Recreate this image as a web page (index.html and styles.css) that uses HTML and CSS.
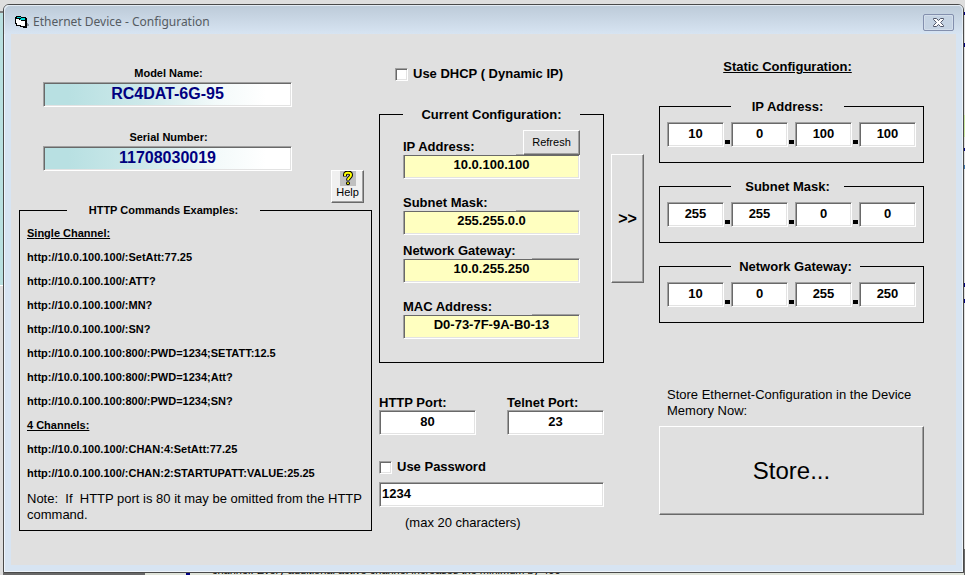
FILE: index.html
```html
<!DOCTYPE html>
<html lang="en">
<head>
<meta charset="utf-8">
<title>Ethernet Device - Configuration</title>
<link rel="stylesheet" href="styles.css">
</head>
<body>
<main class="window">
  <header class="titlebar">
    <svg class="app-icon" width="14" height="14" viewBox="0 0 14 14" shape-rendering="crispEdges" aria-hidden="true">
      <path d="M11 7h1v1h1v1h1v2h-3z" fill="#8a929c"/>
      <path d="M1 1h5v1h5v1h1v10H8v-1H5v-1H1V9H0V2h1z" fill="#000"/>
      <path d="M1 4h3v1h2v1h4v5H8v0H6v-1H2V8H1z" fill="#fff"/>
      <path d="M2 2h4v1h4v1H6V3H2z" fill="#00d8d8"/>
      <path d="M5 4h5v1H5z" fill="#00d8d8"/>
    </svg>
    <h1 class="title">Ethernet Device - Configuration</h1>
    <button class="close" type="button" aria-label="Close">
      <svg width="13" height="11" viewBox="0 0 13 11" aria-hidden="true">
        <path d="M1.500 1.500h3L6.500 3.600 8.500 1.500h3v1L8.600 5.500l2.900 3v1h-3L6.500 7.400 4.500 9.500h-3v-1l2.900-3-2.900-3z" fill="#fff" stroke="#4f5468" stroke-width="1"/>
      </svg>
    </button>
  </header>

  <form class="client">
    <section class="col-info">
      <div class="identity">
        <div class="identity-fields">
          <label class="small-label" for="model">Model Name:</label>
          <input class="field id-field" id="model" value="RC4DAT-6G-95" readonly>
          <label class="small-label second" for="serial">Serial Number:</label>
          <input class="field id-field" id="serial" value="11708030019" readonly>
        </div>
        <button class="btn help" type="button">
          <svg width="16" height="15" viewBox="0 0 16 15" aria-hidden="true">
            <path d="M0 0h16v15H0z" fill="#c0c0c0"/>
            <path d="M5 5.500V4q0-2.500 3-2.500t3 2.500q0 1.500-1.500 2.600T8 9.500" fill="none" stroke="#000" stroke-width="4"/>
            <circle cx="8" cy="12.300" r="2" fill="#000"/>
            <path d="M5 5V4q0-2.300 3-2.300t3 2.300q0 1.500-1.500 2.600T8 9" fill="none" stroke="#ff0" stroke-width="2"/>
            <circle cx="8" cy="12.300" r="1" fill="#ff0"/>
          </svg>
          <span>Help</span>
        </button>
      </div>
      <fieldset class="group commands">
        <legend class="legend-commands"><span>HTTP Commands Examples:</span></legend>
        <h2>Single Channel:</h2>
        <p>http://10.0.100.100/:SetAtt:77.25</p>
        <p>http://10.0.100.100/:ATT?</p>
        <p>http://10.0.100.100/:MN?</p>
        <p>http://10.0.100.100/:SN?</p>
        <p>http://10.0.100.100:800/:PWD=1234;SETATT:12.5</p>
        <p>http://10.0.100.100:800/:PWD=1234;Att?</p>
        <p>http://10.0.100.100:800/:PWD=1234;SN?</p>
        <h2>4 Channels:</h2>
        <p>http://10.0.100.100/:CHAN:4:SetAtt:77.25</p>
        <p>http://10.0.100.100/:CHAN:2:STARTUPATT:VALUE:25.25</p>
        <p class="note">Note:&nbsp; If&nbsp; HTTP port is 80 it may be omitted from the HTTP command.</p>
      </fieldset>
    </section>

    <section class="col-current">
      <label class="check dhcp"><input type="checkbox">Use DHCP ( Dynamic IP)</label>
      <fieldset class="group current">
        <legend class="legend-current"><span>Current Configuration:</span></legend>
        <div class="label-row">
          <label class="tag" for="ip">IP Address:</label>
          <button class="btn refresh" type="button">Refresh</button>
        </div>
        <input class="field value" id="ip" value="10.0.100.100" readonly>
        <label class="tag spaced" for="mask">Subnet Mask:</label>
        <input class="field value" id="mask" value="255.255.0.0" readonly>
        <label class="tag tag-wide" for="gateway">Network Gateway:</label>
        <input class="field value" id="gateway" value="10.0.255.250" readonly>
        <label class="tag tag-wide spaced" for="mac">MAC Address:</label>
        <input class="field value" id="mac" value="D0-73-7F-9A-B0-13" readonly>
      </fieldset>
      <div class="ports">
        <div>
          <label class="port-label" for="http">HTTP Port:</label>
          <input class="field" id="http" value="80">
        </div>
        <div>
          <label class="port-label" for="telnet">Telnet Port:</label>
          <input class="field" id="telnet" value="23">
        </div>
      </div>
      <label class="check password-check"><input type="checkbox">Use Password</label>
      <input class="field password" value="1234" aria-label="Password">
      <p class="hint">(max 20 characters)</p>
    </section>

    <button class="btn copy" type="button" aria-label="Copy current to static">&gt;&gt;</button>

    <section class="col-static">
      <h2 class="static-title">Static Configuration:</h2>
      <fieldset class="group address">
        <legend class="legend-address"><span>IP Address:</span></legend>
        <div class="octets">
          <input class="field" value="10" aria-label="IP octet 1"><i></i>
          <input class="field" value="0" aria-label="IP octet 2"><i></i>
          <input class="field" value="100" aria-label="IP octet 3"><i></i>
          <input class="field" value="100" aria-label="IP octet 4">
        </div>
      </fieldset>
      <fieldset class="group address">
        <legend class="legend-address"><span>Subnet Mask:</span></legend>
        <div class="octets">
          <input class="field" value="255" aria-label="Mask octet 1"><i></i>
          <input class="field" value="255" aria-label="Mask octet 2"><i></i>
          <input class="field" value="0" aria-label="Mask octet 3"><i></i>
          <input class="field" value="0" aria-label="Mask octet 4">
        </div>
      </fieldset>
      <fieldset class="group address">
        <legend class="legend-address legend-gateway"><span>Network Gateway:</span></legend>
        <div class="octets">
          <input class="field" value="10" aria-label="Gateway octet 1"><i></i>
          <input class="field" value="0" aria-label="Gateway octet 2"><i></i>
          <input class="field" value="255" aria-label="Gateway octet 3"><i></i>
          <input class="field" value="250" aria-label="Gateway octet 4">
        </div>
      </fieldset>
      <p class="store-text">Store Ethernet-Configuration in the Device Memory Now:</p>
      <button class="btn store" type="button">Store...</button>
    </section>
  </form>
</main>
<div class="backdrop">
  <span class="bar"></span>
  <span class="mark"></span>
  <span class="backdrop-text">channel. Every additional active channel increases the minimum by 400</span>
</div>
</body>
</html>
```

FILE: styles.css
```css
* {
  box-sizing: border-box;
}

body {
  margin: 0;
  min-height: 100vh;
  padding: 4px 1px 0 3px;
  display: flex;
  flex-direction: column;
  overflow: hidden;
  background:
    linear-gradient(#dedede 11px, #808080 11px 13px, #b9e0e0 13px 285px, #fff 285px 286px, #dedede 286px) left top / 5px 100% no-repeat,
    linear-gradient(#dedede 12px, #000080 12px 15px, #dedede 15px 43px, #000080 43px 47px, #dedede 47px 115px, #c8e6a0 115px 137px, #dedede 137px 148px, #000080 148px 151px, #dedede 151px 165px, #3a78b4 165px 169px, #dedede 169px 283px, #000080 283px 287px, #dedede 287px 299px, #000080 299px 303px, #dedede 303px 549px, #696969 549px) right top / 5px 100% no-repeat,
    #dedede;
  font-family: "Liberation Sans", Arial, sans-serif;
  font-size: 13px;
  line-height: 16px;
  color: #000;
}

h1, h2, p {
  margin: 0;
}

.window {
  flex: 1;
  display: flex;
  flex-direction: column;
  border: 1px solid #4a4a4a;
  border-radius: 6px 6px 0 0;
  background: #d7e4f2;
  box-shadow: inset 1px 1px 0 #eef4fa, inset -1px -1px 0 #eef4fa;
}

.titlebar {
  display: flex;
  align-items: center;
  height: 29px;
  padding: 5px 9px 0 11px;
  border-radius: 5px 5px 0 0;
  background: linear-gradient(#bccad8, #d7e4f2);
  box-shadow: inset 1px 1px 0 #e4ecf4, inset -1px 0 0 #e4ecf4;
}

.app-icon {
  flex: none;
}

.title {
  flex: 1;
  padding-left: 4px;
  font-family: "Noto Sans", sans-serif;
  font-size: 12px;
  font-weight: 400;
  color: #555b62;
}

.close {
  display: flex;
  align-items: center;
  justify-content: center;
  width: 31px;
  height: 17px;
  padding: 0;
  border: 1px solid #838fad;
  border-radius: 2px;
  background: #c5d3e3;
  box-shadow: inset 0 0 0 1px #d3deeb;
}

.client {
  flex: 1;
  display: grid;
  grid-template-columns: 353fr 225fr 33px 273fr;
  column-gap: 7px;
  align-items: start;
  margin: 0 7px 7px;
  padding: 0 32px 8px 8px;
  background: #e0e0e0;
}

/* Sunken boxes */
.field {
  display: block;
  width: 100%;
  min-width: 0;
  height: 25px;
  margin: 0;
  padding: 0 2px 2px;
  border: 1px solid;
  border-color: #a0a0a0 #fff #fff #a0a0a0;
  border-radius: 0;
  background: #fff;
  box-shadow: inset 1px 1px 0 #696969, inset -1px -1px 0 #e3e3e3;
  font: bold 13px/16px "Liberation Sans", Arial, sans-serif;
  color: #000;
  text-align: center;
}

/* Raised buttons */
.btn {
  padding: 0;
  border: 1px solid;
  border-color: #fff #696969 #696969 #fff;
  border-radius: 0;
  background: #e0e0e0;
  box-shadow: inset -1px -1px 0 #a0a0a0;
  font: 11px/13px "Liberation Sans", Arial, sans-serif;
  color: #000;
}

/* Group boxes: the title sits in a gap of the top line */
.group {
  min-width: 0;
  margin: 0;
  border: 1px solid #000;
}

.group legend {
  height: 15px;
  padding: 0;
  line-height: 15px;
  font-weight: bold;
}

.group legend span {
  display: block;
  text-align: center;
}

/* Left column */
.identity {
  display: flex;
  gap: 39px;
  height: 169px;
  padding: 31px 8px 0 24px;
}

.identity-fields {
  flex: 1;
}

.small-label {
  display: block;
  height: 17px;
  padding-left: 2px;
  font-size: 11px;
  font-weight: bold;
  text-align: center;
}

.second {
  margin-top: 22px;
}

.id-field {
  background: linear-gradient(90deg, #b8e0e2 10%, #cde9ea 40%, #f3fafa 70%, #fff 90%);
  font-size: 16px;
  line-height: 18px;
  color: #000080;
}

.help {
  align-self: flex-end;
  display: flex;
  flex-direction: column;
  align-items: center;
  justify-content: flex-start;
  width: 33px;
  height: 33px;
  background: #f0f0f0;
}

.commands {
  padding: 3px 7px 7px;
  font-size: 11px;
  font-weight: bold;
  line-height: 24px;
}

.legend-commands {
  width: 193px;
  margin-left: 40px;
}

.commands h2 {
  font-size: 11px;
  text-decoration: underline;
}

.commands .note {
  padding-top: 6px;
  font-size: 13px;
  font-weight: 400;
  line-height: 16px;
}

/* Middle column */
.check {
  display: flex;
  align-items: center;
  gap: 5px;
  font-weight: bold;
}

.check input {
  appearance: none;
  width: 13px;
  height: 13px;
  margin: 0;
  border: 1px solid;
  border-color: #a0a0a0 #fff #fff #a0a0a0;
  background: #fff;
  box-shadow: inset 1px 1px 0 #696969, inset -1px -1px 0 #e3e3e3;
}

.dhcp {
  margin: 32px 0 25px 16px;
}

.current {
  padding: 8px 23px 23px;
}

.legend-current {
  width: 177px;
}

.label-row {
  display: flex;
  align-items: flex-end;
  justify-content: space-between;
}

/* Labels cover the top line of the box below them */
.tag {
  position: relative;
  display: block;
  width: 113px;
  margin: 8px 0 -1px;
  background: #e0e0e0;
  font-weight: bold;
}

.tag-wide {
  width: 129px;
}

.spaced {
  margin-top: 16px;
}

.refresh {
  position: relative;
  width: 57px;
  height: 25px;
  margin-bottom: -1px;
}

.value {
  padding-bottom: 4px;
  background: #ffffc0;
}

.ports {
  display: grid;
  grid-template-columns: 1fr 1fr;
  column-gap: 31px;
  margin-top: 32px;
}

.port-label {
  display: block;
  height: 15px;
  font-weight: bold;
}

.password-check {
  margin: 24px 0 7px;
}

.password {
  text-align: left;
}

.hint {
  padding: 8px 0 0 26px;
}

.copy {
  width: 33px;
  height: 129px;
  margin-top: 120px;
  font-size: 16px;
  font-weight: bold;
}

/* Right column */
.col-static {
  padding-left: 8px;
}

.static-title {
  padding: 25px 8px 24px 0;
  font-size: 13px;
  text-align: center;
  text-decoration: underline;
}

.address {
  margin-bottom: 16px;
  padding: 8px 7px 15px;
}

.legend-address {
  width: 113px;
  margin-left: 64px;
}

.legend-gateway {
  width: 129px;
}

.octets {
  display: flex;
}

.octets .field {
  flex: 1;
}

.octets i {
  flex: none;
  align-self: flex-end;
  width: 5px;
  height: 4px;
  margin: 0 1px 3px;
  background: #000;
}

.store-text {
  margin-top: 64px;
  padding: 0 8px 7px;
}

.store {
  display: block;
  width: 100%;
  height: 89px;
  font-size: 24px;
}

/* Strip of the window behind */
.backdrop {
  display: flex;
  align-items: flex-end;
  height: 2px;
  overflow: hidden;
  background: #e0e4da;
}

.bar {
  width: 142px;
  height: 2px;
  background: #696969;
}

.mark {
  width: 4px;
  height: 2px;
  margin: 0 22px 0 41px;
  background: #000080;
}

.backdrop-text {
  font-size: 11px;
  line-height: 10px;
}
```
